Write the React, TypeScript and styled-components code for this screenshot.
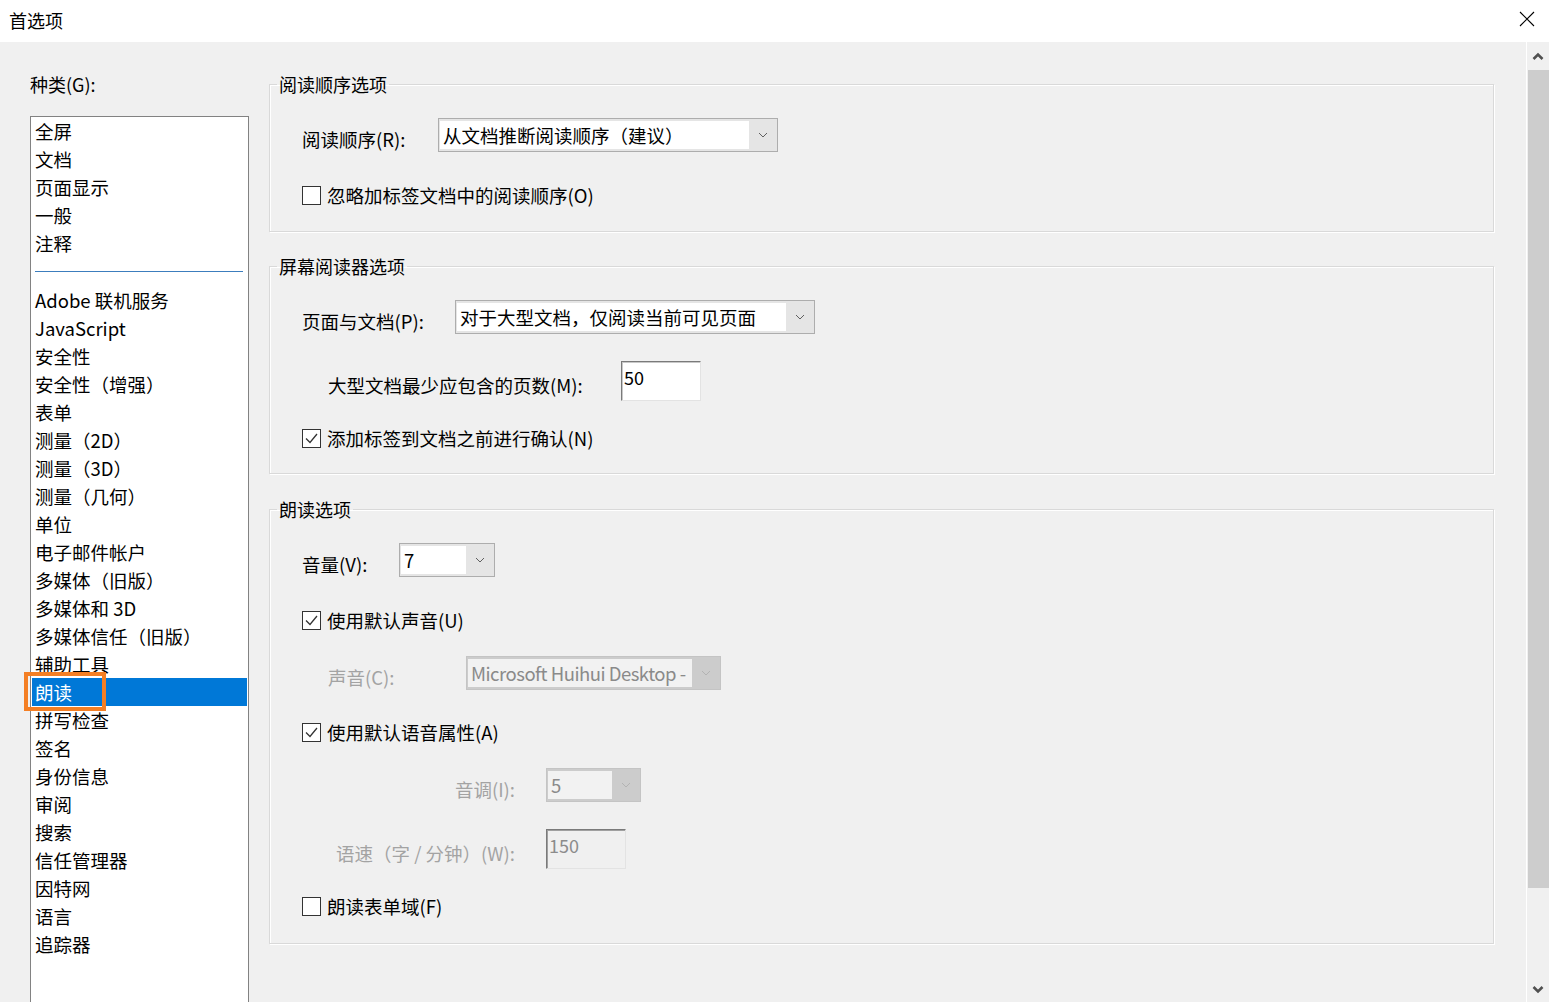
import React from "react";
import styled, { createGlobalStyle } from "styled-components";

const GlobalStyle = createGlobalStyle`
  html, body {
    margin: 0;
    padding: 0;
    overflow: hidden;
  }
  body {
    font-family: "Noto Sans CJK SC", "Noto Sans", sans-serif;
    background: #f0f0f0;
    color: #000;
  }
  * {
    box-sizing: border-box;
  }
`;

const Window = styled.div`
  width: 1549px;
  height: 1002px;
  display: flex;
  flex-direction: column;
  overflow: hidden;
  background: #f0f0f0;
`;

const TitleBar = styled.div`
  height: 42px;
  flex: none;
  background: #ffffff;
  display: flex;
  align-items: center;
  justify-content: space-between;
  padding-left: 9px;
`;

const Title = styled.span`
  font-size: 18px;
  line-height: 26px;
  margin-top: -3px;
`;

const CloseButton = styled.button`
  width: 44px;
  height: 42px;
  border: none;
  background: transparent;
  display: flex;
  align-items: center;
  justify-content: center;
  padding: 0;
  margin-top: -4px;
`;

const Main = styled.div`
  flex: 1;
  display: flex;
  min-height: 0;
`;

const Content = styled.div`
  flex: 1;
  display: flex;
  gap: 20px;
  padding: 29px 0 0 30px;
  min-width: 0;
`;

const Sidebar = styled.div`
  width: 219px;
  flex: none;
  display: flex;
  flex-direction: column;
`;

const CategoryLabel = styled.div`
  font-size: 18px;
  line-height: 26px;
  height: 26px;
`;

const ListBox = styled.div`
  margin-top: 19px;
  flex: 1;
  background: #ffffff;
  border: 1px solid #828282;
  border-bottom: none;
`;

const ListItem = styled.div<{ $selected?: boolean }>`
  position: relative;
  height: 28px;
  line-height: 28px;
  margin: 0 1px;
  padding-left: 3px;
  font-size: 18.5px;
  white-space: nowrap;
  background: ${(p) => (p.$selected ? "#0078d7" : "transparent")};
  color: ${(p) => (p.$selected ? "#ffffff" : "#000000")};
`;

const Highlight = styled.span`
  position: absolute;
  left: -8px;
  top: -6px;
  width: 82px;
  height: 39px;
  border: 4px solid #f47f24;
  pointer-events: none;
`;

const Separator = styled.div`
  height: 1px;
  margin: 14px 5px 14px 4px;
  background: #3c7dbd;
`;

const Panel = styled.div`
  width: 1225px;
  flex: none;
  display: flex;
  flex-direction: column;
`;

const Group = styled.fieldset<{ $mt: number }>`
  margin: ${(p) => p.$mt}px 0 0 0;
  padding: 0;
  border: 1px solid #d9d9d9;
  box-shadow: 1px 1px 0 #ffffff, inset 1px 1px 0 #ffffff;
  min-width: 0;
`;

const Legend = styled.legend`
  margin-left: 7px;
  padding: 0 2px;
  font-size: 18px;
  line-height: 26px;
`;

const GroupBody = styled.div<{ $pb: number }>`
  display: flex;
  flex-direction: column;
  padding: 0 0 ${(p) => p.$pb}px 32px;
`;

const Row = styled.div<{ $mt: number; $indent?: number }>`
  height: 34px;
  margin-top: ${(p) => p.$mt}px;
  padding-left: ${(p) => p.$indent ?? 0}px;
  display: flex;
  align-items: center;
`;

const Label = styled.span<{ $w: number; $disabled?: boolean; $right?: boolean }>`
  width: ${(p) => p.$w}px;
  flex: none;
  margin-top: 8px;
  padding-right: ${(p) => (p.$right ? 31 : 0)}px;
  text-align: ${(p) => (p.$right ? "right" : "left")};
  font-size: 18.5px;
  line-height: 26px;
  white-space: nowrap;
  color: ${(p) => (p.$disabled ? "#a3a3a3" : "#000000")};
`;

const SelectBox = styled.div<{ $w: number; $disabled?: boolean }>`
  width: ${(p) => p.$w}px;
  height: 34px;
  flex: none;
  display: flex;
  border: 1px solid ${(p) => (p.$disabled ? "#c4c4c4" : "#adadad")};
  background: ${(p) => (p.$disabled ? "#cccccc" : "#e5e5e5")};
  padding: 2px 0 2px 1px;
`;

const SelectField = styled.div<{ $disabled?: boolean; $tight?: boolean }>`
  flex: 1;
  min-width: 0;
  background: ${(p) => (p.$disabled ? "#f2f2f2" : "#ffffff")};
  color: ${(p) => (p.$disabled ? "#8a8a8a" : "#000000")};
  font-size: 18.5px;
  line-height: 28px;
  letter-spacing: ${(p) => (p.$tight ? "-0.5px" : "normal")};
  padding-left: 3px;
  white-space: nowrap;
  overflow: hidden;
`;

const SelectArrow = styled.div<{ $disabled?: boolean }>`
  width: 28px;
  flex: none;
  display: flex;
  align-items: center;
  justify-content: center;
  color: ${(p) => (p.$disabled ? "#b3b3b3" : "#606060")};
`;

const TextInput = styled.div<{ $disabled?: boolean }>`
  width: 80px;
  height: 40px;
  flex: none;
  align-self: center;
  border-top: 1px solid #7a7a7a;
  border-left: 1px solid #7a7a7a;
  border-right: 1px solid #e3e3e3;
  border-bottom: 1px solid #e3e3e3;
  box-shadow: inset 1px 1px 0 ${(p) => (p.$disabled ? "#a0a0a0" : "#c8c8c8")};
  background: ${(p) => (p.$disabled ? "#f0f0f0" : "#ffffff")};
  color: ${(p) => (p.$disabled ? "#8c8c8c" : "#000000")};
  font-size: 18px;
  line-height: 28px;
  padding: 1px 0 0 2px;
`;

const CheckRow = styled.label`
  display: flex;
  align-items: center;
  gap: 6px;
  font-size: 18.5px;
  line-height: 26px;
`;

const CheckBox = styled.span`
  width: 19px;
  height: 19px;
  flex: none;
  border: 1px solid #333333;
  background: #ffffff;
  display: flex;
  align-items: center;
  justify-content: center;
`;

const ScrollBar = styled.div`
  width: 23px;
  flex: none;
  display: flex;
  flex-direction: column;
  border-left: 1px solid #ffffff;
  background: #f0f0f0;
`;

const ScrollButton = styled.div<{ $h: number }>`
  height: ${(p) => p.$h}px;
  flex: none;
  display: flex;
  align-items: center;
  justify-content: center;
  color: #505050;
`;

const ScrollThumb = styled.div`
  height: 818px;
  flex: none;
  margin-left: 1px;
  background: #cdcdcd;
`;

const ScrollTrack = styled.div`
  flex: 1;
`;

const Chevron = () => (
  <svg width="10" height="6" viewBox="0 0 10 6">
    <polyline points="1,1 5,5 9,1" fill="none" stroke="currentColor" strokeWidth="1" />
  </svg>
);

const ScrollChevron = ({ up }: { up?: boolean }) => (
  <svg width="12" height="8" viewBox="0 0 12 8">
    <polyline
      points={up ? "1.5,7 6,2.5 10.5,7" : "1.5,1 6,5.5 10.5,1"}
      fill="none"
      stroke="currentColor"
      strokeWidth="2.6"
    />
  </svg>
);

const CheckMark = () => (
  <svg width="15" height="13" viewBox="0 0 15 13">
    <polyline points="2,6.5 6,10.5 13,2" fill="none" stroke="#333" strokeWidth="1.3" />
  </svg>
);

const Select = ({
  w,
  value,
  disabled,
  tight,
}: {
  w: number;
  value: string;
  disabled?: boolean;
  tight?: boolean;
}) => (
  <SelectBox $w={w} $disabled={disabled}>
    <SelectField $disabled={disabled} $tight={tight}>
      {value}
    </SelectField>
    <SelectArrow $disabled={disabled}>
      <Chevron />
    </SelectArrow>
  </SelectBox>
);

const Check = ({ checked, label }: { checked?: boolean; label: string }) => (
  <CheckRow>
    <CheckBox>{checked && <CheckMark />}</CheckBox>
    {label}
  </CheckRow>
);

const topItems = ["全屏", "文档", "页面显示", "一般", "注释"];
const moreItems = [
  "Adobe 联机服务",
  "JavaScript",
  "安全性",
  "安全性（增强）",
  "表单",
  "测量（2D）",
  "测量（3D）",
  "测量（几何）",
  "单位",
  "电子邮件帐户",
  "多媒体（旧版）",
  "多媒体和 3D",
  "多媒体信任（旧版）",
  "辅助工具",
  "朗读",
  "拼写检查",
  "签名",
  "身份信息",
  "审阅",
  "搜索",
  "信任管理器",
  "因特网",
  "语言",
  "追踪器",
];
const selected = "朗读";

export default function App() {
  return (
    <Window>
      <GlobalStyle />
      <TitleBar>
        <Title>首选项</Title>
        <CloseButton aria-label="关闭">
          <svg width="16" height="16" viewBox="0 0 16 16">
            <path d="M1 1 L15 15 M15 1 L1 15" stroke="#000" strokeWidth="1.1" />
          </svg>
        </CloseButton>
      </TitleBar>
      <Main>
        <Content>
          <Sidebar>
            <CategoryLabel>种类(G):</CategoryLabel>
            <ListBox>
              {topItems.map((t) => (
                <ListItem key={t}>{t}</ListItem>
              ))}
              <Separator />
              {moreItems.map((t) => (
                <ListItem key={t} $selected={t === selected}>
                  {t}
                  {t === selected && <Highlight />}
                </ListItem>
              ))}
            </ListBox>
          </Sidebar>

          <Panel>
            <Group $mt={0}>
              <Legend>阅读顺序选项</Legend>
              <GroupBody $pb={19}>
                <Row $mt={21}>
                  <Label $w={136}>阅读顺序(R):</Label>
                  <Select w={340} value="从文档推断阅读顺序（建议）" />
                </Row>
                <Row $mt={26}>
                  <Check label="忽略加标签文档中的阅读顺序(O)" />
                </Row>
              </GroupBody>
            </Group>

            <Group $mt={21}>
              <Legend>屏幕阅读器选项</Legend>
              <GroupBody $pb={18}>
                <Row $mt={21}>
                  <Label $w={153}>页面与文档(P):</Label>
                  <Select w={360} value="对于大型文档，仅阅读当前可见页面" />
                </Row>
                <Row $mt={30} $indent={26}>
                  <Label $w={293}>大型文档最少应包含的页数(M):</Label>
                  <TextInput>50</TextInput>
                </Row>
                <Row $mt={23}>
                  <Check checked label="添加标签到文档之前进行确认(N)" />
                </Row>
              </GroupBody>
            </Group>

            <Group $mt={22}>
              <Legend>朗读选项</Legend>
              <GroupBody $pb={20}>
                <Row $mt={21}>
                  <Label $w={97}>音量(V):</Label>
                  <Select w={96} value="7" />
                </Row>
                <Row $mt={26}>
                  <Check checked label="使用默认声音(U)" />
                </Row>
                <Row $mt={19} $indent={26}>
                  <Label $w={138} $disabled>
                    声音(C):
                  </Label>
                  <Select w={255} value="Microsoft Huihui Desktop -" disabled tight />
                </Row>
                <Row $mt={25}>
                  <Check checked label="使用默认语音属性(A)" />
                </Row>
                <Row $mt={19} $indent={26}>
                  <Label $w={218} $disabled $right>
                    音调(I):
                  </Label>
                  <Select w={95} value="5" disabled />
                </Row>
                <Row $mt={30} $indent={26}>
                  <Label $w={218} $disabled $right>
                    语速（字 / 分钟）(W):
                  </Label>
                  <TextInput $disabled>150</TextInput>
                </Row>
                <Row $mt={23}>
                  <Check label="朗读表单域(F)" />
                </Row>
              </GroupBody>
            </Group>
          </Panel>
        </Content>
        <ScrollBar>
          <ScrollButton $h={28}>
            <ScrollChevron up />
          </ScrollButton>
          <ScrollThumb />
          <ScrollTrack />
          <ScrollButton $h={24}>
            <ScrollChevron />
          </ScrollButton>
        </ScrollBar>
      </Main>
    </Window>
  );
}
